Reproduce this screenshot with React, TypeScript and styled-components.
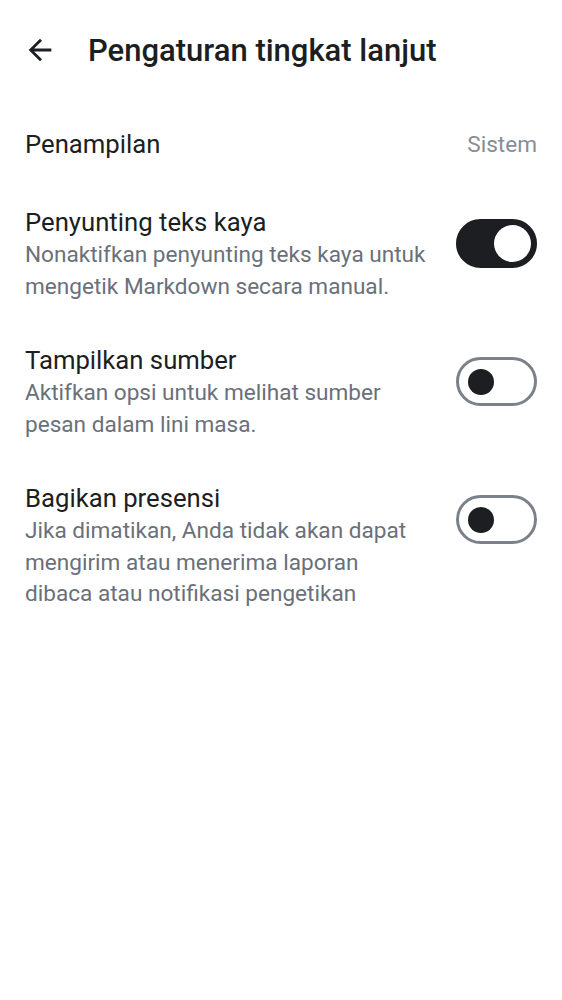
import React, { useState } from "react";
import styled, { createGlobalStyle } from "styled-components";

const Global = createGlobalStyle`
  body {
    margin: 0;
    background: #ffffff;
    font-family: Roboto, "Noto Sans", sans-serif;
  }
`;

const settings = [
  {
    id: "rte",
    title: "Penyunting teks kaya",
    desc: "Nonaktifkan penyunting teks kaya untuk mengetik Markdown secara manual.",
    on: true,
  },
  {
    id: "source",
    title: "Tampilkan sumber",
    desc: "Aktifkan opsi untuk melihat sumber pesan dalam lini masa.",
    on: false,
  },
  {
    id: "presence",
    title: "Bagikan presensi",
    desc: "Jika dimatikan, Anda tidak akan dapat mengirim atau menerima laporan dibaca atau notifikasi pengetikan",
    on: false,
  },
];

const App = () => {
  const [state, setState] = useState<{ [key: string]: boolean }>(() => {
    const init: { [key: string]: boolean } = {};
    for (const s of settings) init[s.id] = s.on;
    return init;
  });

  const flip = (id: string) => setState((prev) => ({ ...prev, [id]: !prev[id] }));

  return (
    <>
      <Global />
      <Page>
        <Header>
          <BackButton aria-label="back">
            <svg width="34" height="34" viewBox="0 0 24 24">
              <path fill="#1d1e22" d="M20 11H7.83l5.59-5.59L12 4l-8 8 8 8 1.41-1.41L7.83 13H20v-2z" />
            </svg>
          </BackButton>
          <Title>Pengaturan tingkat lanjut</Title>
        </Header>
        <List>
          <ValueRow>
            <ItemTitle>Penampilan</ItemTitle>
            <Value>Sistem</Value>
          </ValueRow>
          {settings.map((s) => (
            <Row key={s.id}>
              <TextCol>
                <ItemTitle>{s.title}</ItemTitle>
                <Desc>{s.desc}</Desc>
              </TextCol>
              <Switch $on={state[s.id]} onClick={() => flip(s.id)} role="switch" aria-checked={state[s.id]}>
                <Knob $on={state[s.id]} />
              </Switch>
            </Row>
          ))}
        </List>
      </Page>
    </>
  );
};

export default App;

const Page = styled.div`
  width: 562px;
  min-height: 1000px;
  background: #fff;
`;

const Header = styled.div`
  height: 100px;
  display: flex;
  align-items: center;
  padding-left: 23px;
  box-sizing: border-box;
`;

const BackButton = styled.button`
  border: none;
  background: none;
  padding: 0;
  display: flex;
  width: 34px;
  height: 34px;
  cursor: pointer;
`;

const Title = styled.h1`
  margin: 0 0 0 31px;
  font-size: 31px;
  font-weight: 500;
  color: #1d1e22;
  letter-spacing: 0;
`;

const List = styled.div`
  padding-top: 4px;
  display: flex;
  flex-direction: column;
`;

const ValueRow = styled.div`
  display: flex;
  align-items: center;
  justify-content: space-between;
  min-height: 40px;
  padding: 20px 25px 21px;
`;

const Row = styled.div`
  display: flex;
  align-items: flex-start;
  justify-content: space-between;
  padding: 20px 25px 21px;
`;

const TextCol = styled.div`
  width: 403px;
  display: flex;
  flex-direction: column;
`;

const ItemTitle = styled.div`
  font-size: 25.7px;
  line-height: 34px;
  color: #1d1e22;
`;

const Desc = styled.div`
  font-size: 22.6px;
  line-height: 31.5px;
  color: #6a707a;
`;

const Value = styled.div`
  font-size: 22.6px;
  color: #878d96;
`;

const Switch = styled.div<{ $on: boolean }>`
  flex: none;
  margin-top: 14px;
  width: 81px;
  height: 49px;
  box-sizing: border-box;
  border-radius: 25px;
  border: 3px solid ${(p) => (p.$on ? "#1d1e22" : "#7b8189")};
  background: ${(p) => (p.$on ? "#1d1e22" : "#ffffff")};
  display: flex;
  align-items: center;
  justify-content: ${(p) => (p.$on ? "flex-end" : "flex-start")};
  padding: 0 ${(p) => (p.$on ? "3px" : "9px")};
  cursor: pointer;
`;

const Knob = styled.div<{ $on: boolean }>`
  width: ${(p) => (p.$on ? "37px" : "26px")};
  height: ${(p) => (p.$on ? "37px" : "26px")};
  border-radius: 50%;
  background: ${(p) => (p.$on ? "#ffffff" : "#1d1e22")};
`;
